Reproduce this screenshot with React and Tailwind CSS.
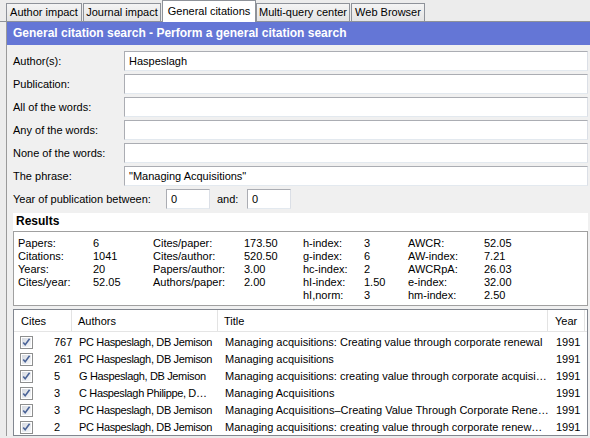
import React from "react";

// Publish-or-Perish style "General citations" pane.
const TABS = [
  { label: "Author impact", cls: "w-[76px]" },
  { label: "Journal impact", cls: "w-[78px]" },
  { label: "General citations", cls: "w-[94px]", active: true },
  { label: "Multi-query center", cls: "w-[94px]" },
  { label: "Web Browser", cls: "w-[74px]" },
];

const FIELDS = [
  { label: "Author(s):", value: "Haspeslagh" },
  { label: "Publication:", value: "" },
  { label: "All of the words:", value: "" },
  { label: "Any of the words:", value: "" },
  { label: "None of the words:", value: "" },
  { label: "The phrase:", value: "\"Managing Acquisitions\"" },
];

const STATS = [
  ["Papers:", "6", "Cites/paper:", "173.50", "h-index:", "3", "AWCR:", "52.05"],
  ["Citations:", "1041", "Cites/author:", "520.50", "g-index:", "6", "AW-index:", "7.21"],
  ["Years:", "20", "Papers/author:", "3.00", "hc-index:", "2", "AWCRpA:", "26.03"],
  ["Cites/year:", "52.05", "Authors/paper:", "2.00", "hI-index:", "1.50", "e-index:", "32.00"],
  ["", "", "", "", "hI,norm:", "3", "hm-index:", "2.50"],
];

const ROWS = [
  { cites: 767, authors: "PC Haspeslagh, DB Jemison", title: "Managing acquisitions: Creating value through corporate renewal", year: 1991 },
  { cites: 261, authors: "PC Haspeslagh, DB Jemison", title: "Managing acquisitions", year: 1991 },
  { cites: 5, authors: "G Haspeslagh, DB Jemison", title: "Managing acquisitions: creating value through corporate acquisi…", year: 1991 },
  { cites: 3, authors: "C Haspeslagh Philippe, D…", title: "Managing Acquisitions", year: 1991 },
  { cites: 3, authors: "PC Haspeslagh, DB Jemison", title: "Managing Acquisitions–Creating Value Through Corporate Rene…", year: 1991 },
  { cites: 2, authors: "PC Haspeslagh, DB Jemison", title: "Managing acquisitions: creating value through corporate renew…", year: 1991 },
];

const Check = () => (
  <svg width="13" height="13" viewBox="0 0 13 13" className="block shrink-0">
    <defs>
      <linearGradient id="cbg" x1="0" y1="0" x2="1" y2="1">
        <stop offset="0" stopColor="#d5d9e0" />
        <stop offset="1" stopColor="#f7f8fa" />
      </linearGradient>
    </defs>
    <rect x="0.5" y="0.5" width="12" height="12" fill="#fff" stroke="#8e8f8f" />
    <rect x="2" y="2" width="9" height="9" fill="url(#cbg)" />
    <path d="M3.2 6.4 L5.2 8.8 L9.6 2.8" fill="none" stroke="#4a6397" strokeWidth="1.6" />
  </svg>
);

const TextBox = ({ value, cls = "" }) => (
  <div className={`h-[20px] bg-white border border-[#abadb3] border-b-[#e3e9ef] border-r-[#dbdfe6] pl-[4px] leading-[18px] whitespace-nowrap ${cls}`}>
    {value}
  </div>
);

export default function App() {
  return (
    <div className="w-[590px] h-[438px] overflow-hidden bg-[#ececec] text-[11px] text-black font-['Liberation_Sans',Arial,sans-serif] flex flex-col">
      {/* tabs */}
      <div className="flex items-end h-[22px] pl-[6px] border-b border-[#8e9299] shrink-0">
        {TABS.map((t) =>
          t.active ? (
            <div
              key={t.label}
              className={`${t.cls} h-[22px] -mb-px bg-white border border-b-0 border-[#8e9299] text-center leading-[20px]`}
            >
              {t.label}
            </div>
          ) : (
            <div
              key={t.label}
              className={`${t.cls} h-[18px] mr-px bg-gradient-to-b from-[#f4f4f4] to-[#e4e4e4] border border-b-0 border-[#8e9299] text-center leading-[17px]`}
            >
              {t.label}
            </div>
          )
        )}
      </div>

      {/* panel */}
      <div className="flex-1 ml-[6px] mb-[2px] border-l border-[#9a9a9a] bg-[#f0f0f0] flex flex-col min-h-0">
        <div className="h-[23px] bg-[#6476d6] text-white font-bold text-[12px] leading-[23px] pl-[6px] whitespace-nowrap">
          General citation search - Perform a general citation search
        </div>

        {/* form */}
        <div className="pt-[6px] pl-[6px] pr-[2px] flex flex-col gap-[3px]">
          {FIELDS.map((f) => (
            <div key={f.label} className="flex items-center">
              <div className="w-[111px] shrink-0">{f.label}</div>
              <TextBox value={f.value} cls="flex-1" />
            </div>
          ))}
          <div className="flex items-center">
            <div className="w-[153px] shrink-0">Year of publication between:</div>
            <TextBox value="0" cls="w-[44px]" />
            <div className="w-[37px] pl-[7px]">and:</div>
            <TextBox value="0" cls="w-[44px]" />
          </div>
        </div>

        {/* results */}
        <div className="mt-[4px] ml-[6px] mr-[2px] flex flex-col min-h-0 flex-1">
          <div className="h-[17px] bg-white font-bold text-[12px] leading-[16px] pl-[3px]">Results</div>
          <div className="bg-white pt-[1px]">
            <div className="border border-[#a0a0a0] bg-white h-[75px] pt-[5px] pl-[4px]">
              <div className="grid grid-cols-[75px_60px_91px_59px_61px_44px_76px_1fr] leading-[13px]">
                {STATS.flat().map((s, i) => (
                  <div key={i}>{s}</div>
                ))}
              </div>
            </div>
          </div>
          <div className="mt-[3px] flex-1 bg-white border border-[#828790] min-h-0 overflow-hidden">
            <div className="flex h-[22px] items-stretch border-b border-[#e5e5e5]">
              <div className="w-[58px] pl-[7px] leading-[23px] border-r border-[#e3e3e3]">Cites</div>
              <div className="w-[146px] pl-[6px] leading-[23px] border-r border-[#e3e3e3]">Authors</div>
              <div className="w-[330px] pl-[6px] leading-[23px] border-r border-[#e3e3e3]">Title</div>
              <div className="w-[37px] pl-[7px] leading-[23px] border-r border-[#e3e3e3]">Year</div>
            </div>
            <div className="pt-[2px]">
              {ROWS.map((r, i) => (
                <div key={i} className="flex h-[17px] items-center whitespace-nowrap">
                  <div className="w-[58px] flex items-center pl-[6px]">
                    <Check />
                    <span className="ml-[21px]">{r.cites}</span>
                  </div>
                  <div className="w-[146px] pl-[7px] tracking-[-0.35px] overflow-hidden">{r.authors}</div>
                  <div className="w-[330px] pl-[7px] overflow-hidden">{r.title}</div>
                  <div className="w-[37px] pl-[8px]">{r.year}</div>
                </div>
              ))}
            </div>
          </div>
        </div>
      </div>
    </div>
  );
}
